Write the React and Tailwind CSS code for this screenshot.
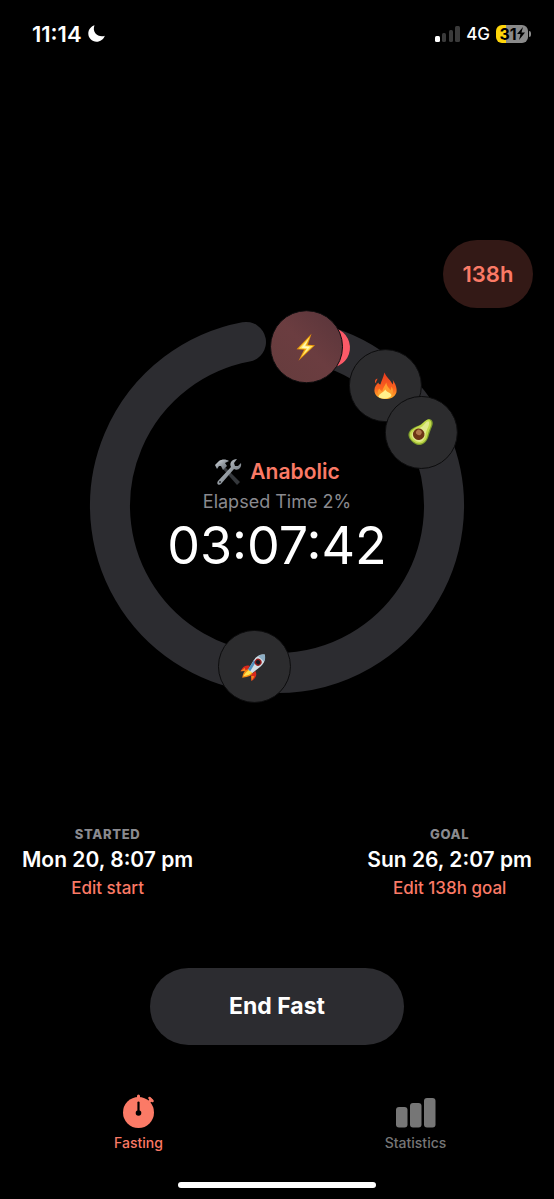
const RADIUS = 167;

// 0 degrees is twelve o'clock, clockwise
function pointAt(degrees, radius) {
  const angle = ((degrees - 90) * Math.PI) / 180;
  return [198 + radius * Math.cos(angle), 198 + radius * Math.sin(angle)];
}

function arcPath(from, to) {
  const [x1, y1] = pointAt(from, RADIUS);
  const [x2, y2] = pointAt(to, RADIUS);
  const large = to - from > 180 ? 1 : 0;
  return `M${x1} ${y1} A${RADIUS} ${RADIUS} 0 ${large} 1 ${x2} ${y2}`;
}

function Bolt() {
  return (
    <g>
      <path d="M5-13-10 2.500-2.500 3-8 14 8.500-1.500 1.300-2Z" fill="#e8950c" />
      <path d="M3.300-10-7.800 1.800-.5 2.200-5.500 10.500 6.500-.8-.6-1.200Z" fill="#ffe45c" />
      <path d="M1.500-7-5 1 1 1.500-2 6 3.500 0-2-.5Z" fill="#fff8c4" />
    </g>
  );
}

function Flame() {
  return (
    <g>
      <path
        d="M-1-13C1-8 6-5 7-1 8-3 8-4 7-6 10-2 12 3 11 7 9 12 5 13.500 0 13.500-6 13.500-11 10-11 5-11 1-9-1-7-3-7-2-6-1-5-1-4-5-2-8-1-13ZM-8-7C-11-6-11-3-9-2-10-4-8-5-8-7Z"
        fill="url(#flame)"
      />
      <path
        d="M1-3C1 1 4 2 5 5 6 3 6 2 6 1 9 5 8 12 0 13-8 12-9 6-6 3-5 5-4 6-3 6-3 3-1 1 1-3Z"
        fill="#ff9e2e"
      />
      <path d="M0 4C1 7 6 7 6 10 4 14-5 14-7 11-6 8-2 7 0 4Z" fill="#fff08a" />
    </g>
  );
}

function Avocado() {
  return (
    <g transform="rotate(38)">
      <path
        d="M0-16C4-16 5-11 6-7 7-3 10 1 9 6 8 11 5 13 0 13-5 13-10 11-10 6-10 1-6-3-5-7-4-11-4-16 0-16Z"
        fill="#7d9c2c"
      />
      <path
        d="M-1-15C3-15 4-10 5-6 6-2 9 1 8 6 7 10 4 12-1 12-6 12-9 9-9 5-9 1-6-3-5-6-4-10-4-15-1-15Z"
        fill="#c3da4c"
      />
      <path
        d="M-1-13C1-13 2-9 3-5 4-1 7 1 6 6 5 9 3 10-1 10-5 10-7 8-7 5-7 1-4-2-3-5-2-9-3-13-1-13Z"
        fill="#e0e98c"
      />
      <circle cx="-1" cy="3" r="5.800" fill="#6d3516" />
      <circle cx="-2" cy="1.500" r="2.800" fill="#b0764c" />
    </g>
  );
}

function Rocket() {
  return (
    <g transform="rotate(41) scale(0.920)">
      <path d="M-4 3C-9 5-9 9-8 14L-3 9ZM4 3C9 5 9 9 8 14L3 9Z" fill="#d8281d" />
      <path d="M-7 8-8 14-4 10ZM7 8 8 14 4 10Z" fill="#f4801c" />
      <path d="M-3 6C-6 11-4 14-2 18 0 15 5 11 3 6Z" fill="#f48a12" />
      <path d="M-2 6C-3 10-3 13-2 16 1 12 3 9 2 6Z" fill="#ffe34d" />
      <path d="M0-17C5-13 5.500-9 5-4L3 7H-3L-5-4C-5.500-9-5-13 0-17Z" fill="#d3dfe6" />
      <path d="M-5-5-3 7H0L-2-4Z" fill="#4f8fc0" />
      <path d="M0-17C3-15 4-13 4.300-11L-4.300-11C-4-13-3-15 0-17Z" fill="#8eafc5" />
      <circle cy="-6" r="3.800" fill="#941c1c" />
      <circle cy="-6" r="2.300" fill="#151b24" />
    </g>
  );
}

function Tools() {
  return (
    <svg viewBox="0 0 28 28" className="size-7" aria-hidden="true">
      <defs>
        <linearGradient id="steel" x1="0" y1="0" x2="1" y2="1">
          <stop offset="0" stopColor="#dfe4e9" />
          <stop offset="0.5" stopColor="#9299a0" />
          <stop offset="1" stopColor="#5d636a" />
        </linearGradient>
      </defs>
      <path d="M11 9 26 24 23 27 9 11Z" fill="#34373b" />
      <path
        d="M1 7 5 3C8 1 12 1 15 3L11 5 13 8 9 12 7 8 5 8 3 11Z"
        fill="url(#steel)"
      />
      <path
        d="M23 1 20 5 21 8 24 8 27 5C28 10 24 13 20 11L7 26C5 28 2 26 4 23L17 9C15 5 18 1 23 1Z"
        fill="url(#steel)"
      />
      <circle cx="6" cy="24" r="1" fill="#22262a" />
    </svg>
  );
}

const stages = [
  { name: "Catabolic", degrees: 10.5, icon: Bolt, active: true },
  { name: "Fat burning", degrees: 42, icon: Flame },
  { name: "Ketosis", degrees: 63, icon: Avocado },
  { name: "Autophagy", degrees: 188, icon: Rocket },
];

function StatusBar() {
  return (
    <header className="flex h-[67px] items-center justify-between pl-8 pr-[23px]">
      <div className="flex items-center gap-[6px] text-[22px] font-semibold leading-6">
        <span>11:14</span>
        <svg viewBox="0 0 17 17" className="size-[17px]" fill="currentColor" aria-hidden="true">
          <path d="M6.500.3C2.800 1.500.3 4.800.3 8.600.3 13.200 4 16.800 8.500 16.800 12.300 16.800 15.600 14.400 16.800 10.800 11 13 3.500 8 6.500.3Z" />
        </svg>
      </div>
      <div className="flex items-center gap-[6px]">
        <svg viewBox="0 0 25 16" className="h-4 w-[25px]" aria-hidden="true">
          <rect x="0" y="10" width="5" height="6" rx="1.500" fill="#fff" />
          <rect x="7" y="7" width="4" height="9" rx="1.500" fill="#3a3a3a" />
          <rect x="14" y="4" width="4" height="12" rx="1.500" fill="#3a3a3a" />
          <rect x="20" y="0" width="5" height="16" rx="1.500" fill="#3a3a3a" />
        </svg>
        <span className="text-[17px] font-medium leading-6">4G</span>
        <div className="flex items-center gap-px">
          <div className="flex h-[18px] w-8 items-center justify-center rounded-[6px] bg-linear-to-r from-[#ffd60a] from-31% to-[#8a8a8a] to-31% text-black">
            <span className="text-[16px] font-bold leading-[18px]">31</span>
            <svg viewBox="0 0 8 13" className="h-[13px] w-2" fill="currentColor" aria-hidden="true">
              <path d="M6 0 0 7H3.500L2 13 8 5.500H4.500Z" />
            </svg>
          </div>
          <div className="h-[6px] w-[2px] rounded-r-full bg-[#8a8a8a]" />
        </div>
      </div>
    </header>
  );
}

function FastingRing() {
  return (
    <section className="grid place-items-center">
      <svg
        viewBox="0 0 396 396"
        className="col-start-1 row-start-1 w-full max-w-[396px]"
        role="img"
        aria-label="Fasting progress"
      >
        <defs>
          <linearGradient id="flame" x1="0" y1="0" x2="0" y2="1">
            <stop offset="0" stopColor="#e8391f" />
            <stop offset="0.6" stopColor="#fb641f" />
            <stop offset="1" stopColor="#ffb62b" />
          </linearGradient>
          <linearGradient id="active" x1="0" y1="1" x2="1" y2="0">
            <stop offset="0" stopColor="#653c3d" />
            <stop offset="0.5" stopColor="#6b3d40" />
            <stop offset="1" stopColor="#58343a" />
          </linearGradient>
        </defs>
        <g fill="none" strokeWidth="40" strokeLinecap="round">
          <path d={arcPath(10.7, 349.3)} stroke="#2c2c30" />
          <path d={arcPath(10.7, 18.5)} stroke="#fb5a68" />
        </g>
        {stages.map(({ name, degrees, icon: Icon, active }) => {
          const [x, y] = pointAt(degrees, 162);
          return (
            <g key={name} transform={`translate(${x} ${y})`}>
              <circle
                r="36"
                fill={active ? "url(#active)" : "#2c2c2e"}
                stroke="#0c0c0d"
                strokeWidth="1"
              />
              <Icon />
            </g>
          );
        })}
      </svg>
      <div className="col-start-1 row-start-1 flex flex-col items-center pt-5">
        <h1 className="flex items-center gap-2 text-[21px] font-semibold leading-8 text-[#fb7a66]">
          <Tools />
          Anabolic
        </h1>
        <p className="text-[18px] leading-7 text-[#8a8a8f]">Elapsed Time 2%</p>
        <p className="text-[52px] leading-[60px]">03:07:42</p>
      </div>
    </section>
  );
}

function TimeInfo({ label, value, action }) {
  return (
    <div className="flex flex-col items-center gap-1">
      <h2 className="text-[13px] font-extrabold uppercase leading-4 tracking-wider text-[#8a8a8f]">
        {label}
      </h2>
      <p className="text-[21px] font-semibold leading-7">{value}</p>
      <button className="text-[17px] font-medium leading-5 text-[#fb7a66]">{action}</button>
    </div>
  );
}

function TabBar() {
  return (
    <nav className="mt-12 grid grid-cols-2 text-[14px] font-medium leading-5">
      <a href="#fasting" className="flex flex-col items-center gap-1 text-[#fb7a66]">
        <svg viewBox="0 0 36 36" className="size-9" aria-hidden="true">
          <circle cx="17.500" cy="19.500" r="15.500" fill="currentColor" />
          <path
            d="M17.500 3V6M28 9 30 7"
            fill="none"
            stroke="currentColor"
            strokeWidth="3"
            strokeLinecap="round"
          />
          <path d="M28.500 5 31.500 8" stroke="currentColor" strokeWidth="2.500" strokeLinecap="round" />
          <path d="M17.500 9.500V20" stroke="#000" strokeWidth="2.200" strokeLinecap="round" />
          <circle cx="17.500" cy="20" r="2.800" fill="#000" />
        </svg>
        Fasting
      </a>
      <a href="#statistics" className="flex flex-col items-center gap-1 text-[#767676]">
        <svg viewBox="0 0 40 36" className="h-9 w-10" fill="currentColor" aria-hidden="true">
          <rect x="0" y="14" width="11.500" height="20.500" rx="3" />
          <rect x="14" y="10" width="11.500" height="24.500" rx="3" />
          <rect x="28" y="5" width="11.500" height="29.500" rx="3" />
        </svg>
        Statistics
      </a>
    </nav>
  );
}

export default function App() {
  return (
    <div className="flex min-h-screen flex-col bg-black font-['Inter',sans-serif] text-white">
      <StatusBar />
      <main className="flex flex-col pt-[173px]">
        <button className="mr-[21px] h-[68px] w-[90px] self-end rounded-full bg-[#331916] text-[22px] font-semibold text-[#fb7a66]">
          138h
        </button>
        <FastingRing />
        <div className="mt-[122px] flex justify-between px-[22px]">
          <TimeInfo label="Started" value="Mon 20, 8:07 pm" action="Edit start" />
          <TimeInfo label="Goal" value="Sun 26, 2:07 pm" action="Edit 138h goal" />
        </div>
        <button className="mt-[70px] h-[77px] w-[254px] self-center rounded-full bg-[#2c2c30] text-[23px] font-bold">
          End Fast
        </button>
      </main>
      <TabBar />
      <div className="mt-auto flex justify-center pb-[11px] pt-7">
        <div className="h-[6px] w-[198px] rounded-full bg-white" />
      </div>
    </div>
  );
}
